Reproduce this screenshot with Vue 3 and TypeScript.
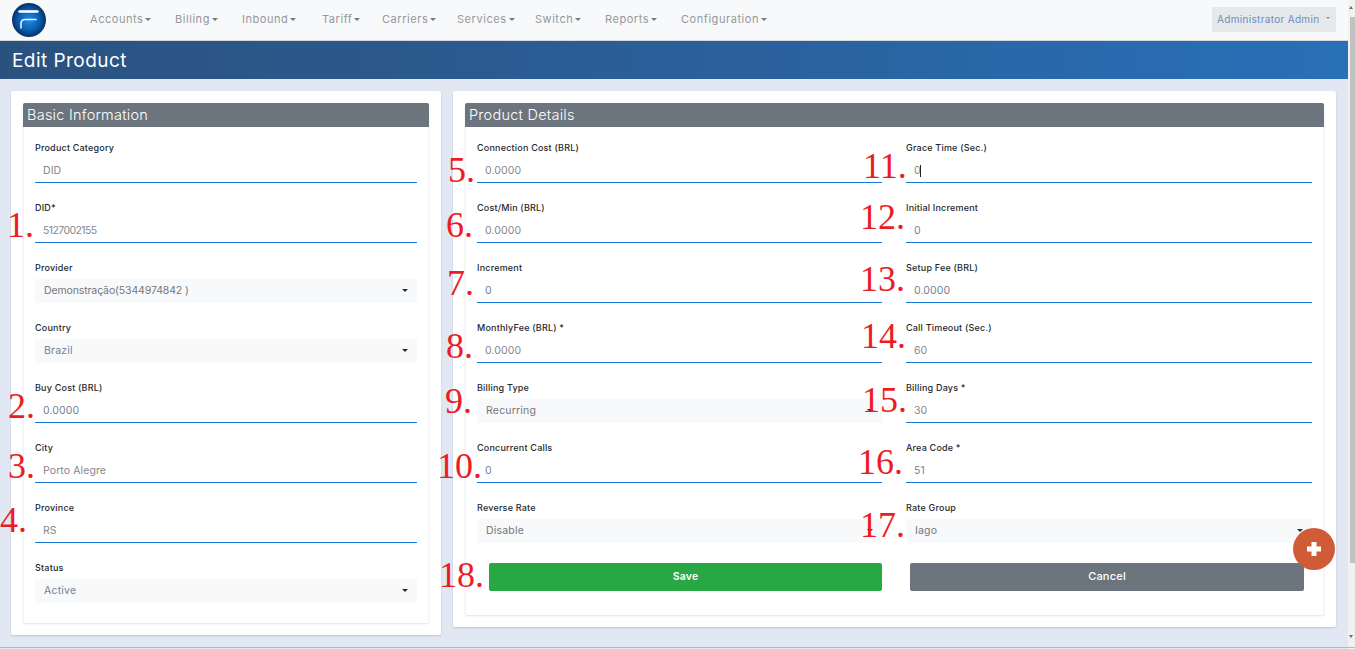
<script setup lang="ts">
interface Field { label: string; value: string; kind?: 'input' | 'select'; tone?: string; caret?: boolean }

const menu: string[] = ['Accounts', 'Billing', 'Inbound', 'Tariff', 'Carriers', 'Services', 'Switch', 'Reports', 'Configuration']

const basic: Field[] = [
  { label: 'Product Category', value: 'DID' },
  { label: 'DID*', value: '5127002155', tone: 'tight' },
  { label: 'Provider', value: 'Demonstração(5344974842 )', kind: 'select', tone: 'snug' },
  { label: 'Country', value: 'Brazil', kind: 'select', tone: 'blue' },
  { label: 'Buy Cost (BRL)', value: '0.0000', tone: 'blue' },
  { label: 'City', value: 'Porto Alegre' },
  { label: 'Province', value: 'RS' },
  { label: 'Status', value: 'Active', kind: 'select', tone: 'blue' },
]

const details: Field[] = [
  { label: 'Connection Cost (BRL)', value: '0.0000' },
  { label: 'Grace Time (Sec.)', value: '0', caret: true },
  { label: 'Cost/Min (BRL)', value: '0.0000' },
  { label: 'Initial Increment', value: '0', tone: 'blue' },
  { label: 'Increment', value: '0', tone: 'blue' },
  { label: 'Setup Fee (BRL)', value: '0.0000', tone: 'blue' },
  { label: 'MonthlyFee (BRL) *', value: '0.0000' },
  { label: 'Call Timeout (Sec.)', value: '60' },
  { label: 'Billing Type', value: 'Recurring', kind: 'select' },
  { label: 'Billing Days *', value: '30' },
  { label: 'Concurrent Calls', value: '0', tone: 'blue' },
  { label: 'Area Code *', value: '51', tone: 'blue' },
  { label: 'Reverse Rate', value: 'Disable', kind: 'select' },
  { label: 'Rate Group', value: 'Iago', kind: 'select' },
]

const marks: { text: string; x: number; base: number }[] = [
  { text: '1.', x: 7, base: 237 },
  { text: '2.', x: 8, base: 418 },
  { text: '3.', x: 8, base: 478 },
  { text: '4.', x: 0, base: 532 },
  { text: '5.', x: 448, base: 182 },
  { text: '6.', x: 446, base: 237 },
  { text: '7.', x: 447, base: 295 },
  { text: '8.', x: 446, base: 358 },
  { text: '9.', x: 445, base: 413 },
  { text: '10.', x: 437, base: 478 },
  { text: '11.', x: 863, base: 178 },
  { text: '12.', x: 860, base: 229 },
  { text: '13.', x: 860, base: 291 },
  { text: '14.', x: 861, base: 348 },
  { text: '15.', x: 862, base: 412 },
  { text: '16.', x: 858, base: 474 },
  { text: '17.', x: 860, base: 537 },
  { text: '18.', x: 439, base: 587 },
]

function markStyle(m: { x: number; base: number }) {
  return { left: `${m.x}px`, top: `${m.base - 30}px` }
}
</script>

<template>
  <div class="shell">
    <div class="page">
      <header class="nav">
        <svg class="logo" width="36" height="36" viewBox="0 0 36 36" aria-hidden="true">
          <defs>
            <radialGradient id="orb" cx="50%" cy="50%" r="52%">
              <stop offset="0" stop-color="#1c8ee6" />
              <stop offset="0.55" stop-color="#0b62b4" />
              <stop offset="0.85" stop-color="#053f80" />
              <stop offset="1" stop-color="#0a2a5a" />
            </radialGradient>
          </defs>
          <circle cx="18" cy="18" r="17" fill="url(#orb)" />
          <path d="M8.5 9.5H26.5" stroke="#fff" stroke-width="2.4" fill="none" stroke-linecap="round" />
          <path d="M10 26V21.5C10 18.5 11.5 17.5 14.5 17.5H25" stroke="#e8f2fb" stroke-width="1.6" fill="none" stroke-linecap="round" />
        </svg>
        <nav class="menu">
          <span v-for="m in menu" :key="m" class="menu-item">{{ m }}<i class="tri"></i></span>
        </nav>
        <div class="user">Administrator Admin<i class="tri small"></i></div>
      </header>

      <div class="title"><h1>Edit Product</h1></div>

      <main class="content">
        <section class="card left">
          <div class="inner">
            <h2>Basic Information</h2>
            <div class="fields single">
              <div v-for="f in basic" :key="f.label" class="field">
                <label>{{ f.label }}</label>
                <div v-if="f.kind === 'select'" class="select" :class="f.tone">{{ f.value }}<i class="tri dark"></i></div>
                <input v-else class="input" :class="f.tone" :value="f.value" readonly />
              </div>
            </div>
          </div>
        </section>

        <section class="card right">
          <div class="inner">
            <h2>Product Details</h2>
            <div class="fields double">
              <div v-for="f in details" :key="f.label" class="field">
                <label>{{ f.label }}</label>
                <div v-if="f.kind === 'select'" class="select" :class="f.tone">{{ f.value }}<i class="tri dark"></i></div>
                <div v-else class="input-wrap">
                  <input class="input" :class="f.tone" :value="f.value" readonly />
                  <span v-if="f.caret" class="text-caret"></span>
                </div>
              </div>
            </div>
            <div class="actions">
              <button class="btn save" type="button">Save</button>
              <button class="btn cancel" type="button">Cancel</button>
            </div>
          </div>
        </section>
      </main>
    </div>

    <aside class="scrollbar">
      <span class="arrow up"></span>
      <span class="thumb"></span>
      <span class="arrow down"></span>
    </aside>

    <div class="bottom-edge"></div>

    <button class="fab" type="button" aria-label="Add">
      <svg width="16" height="16" viewBox="0 0 16 16" aria-hidden="true">
        <path d="M8 1v14M1 8h14" stroke="#fff" stroke-width="5" stroke-linejoin="round" />
      </svg>
    </button>

    <span v-for="m in marks" :key="m.text" class="mark" :style="markStyle(m)">{{ m.text }}</span>
  </div>
</template>

<style>
html, body { margin: 0; padding: 0; overflow: hidden; }
</style>

<style scoped>
.shell {
  position: relative;
  display: flex;
  width: 1355px;
  height: 649px;
  overflow: hidden;
  background: #e1e8f3;
  font-family: Inter, "Noto Sans", sans-serif;
}
.page { flex: 1; min-width: 0; }
.nav {
  display: flex;
  align-items: center;
  height: 40px;
  padding: 0 12px 0 11px;
  background: #f8f9fa;
  border-bottom: 1px solid #d8d9db;
}
.logo { flex: none; }
.menu {
  display: grid;
  grid-template-columns: 85px 67px 80px 60px 75px 78px 70px 76px auto;
  margin-left: 43px;
  margin-top: -2px;
  flex: 1;
}
.menu-item {
  font-size: 11px;
  letter-spacing: 0.55px;
  color: #959799;
  white-space: nowrap;
}
.tri {
  display: inline-block;
  margin-left: 2px;
  vertical-align: 2px;
  border-top: 3px solid #77797b;
  border-left: 3px solid transparent;
  border-right: 3px solid transparent;
}
.tri.small { margin-left: 7px; vertical-align: 4px; border-top-color: #6c8ec4; border-top-width: 2.5px; border-left-width: 2.5px; border-right-width: 2.5px; }
.user {
  width: 124px;
  height: 25px;
  margin-top: -2px;
  box-sizing: border-box;
  padding-left: 5px;
  line-height: 25px;
  font-size: 10px;
  letter-spacing: 0.32px;
  white-space: nowrap;
  color: #6b8cc0;
  background: #e7e8ea;
}
.title {
  height: 38px;
  display: flex;
  align-items: center;
  padding-left: 12px;
  background: linear-gradient(90deg, #2a527f 0%, #2b5a90 35%, #2870b8 100%);
}
.title h1 {
  margin: 0;
  font-size: 19px;
  font-weight: 400;
  letter-spacing: 0.45px;
  color: #fff;
}
.content {
  display: flex;
  align-items: flex-start;
  gap: 12px;
  padding: 12px 12px 0 11px;
}
.card {
  box-sizing: border-box;
  background: #fff;
  border-radius: 2px;
  padding: 12px;
  box-shadow: 0 1px 2px rgba(90, 100, 120, 0.25);
}
.card.left { width: 430px; }
.card.right { width: 883px; }
.inner {
  border-radius: 2px;
  box-shadow: 0 1px 2px rgba(120, 125, 135, 0.22);
  border-left: 1px solid #f3f4f6;
  border-right: 1px solid #f3f4f6;
}
h2 {
  margin: 0 -1px;
  height: 24px;
  line-height: 24px;
  padding-left: 4px;
  font-size: 14.5px;
  font-weight: 300;
  letter-spacing: 0.25px;
  color: #fff;
  background: #6c757d;
  border-radius: 2px 2px 0 0;
}
.fields { padding: 8px 11px 8px; }
.fields.double {
  display: grid;
  grid-template-columns: 405px 406px;
  column-gap: 24px;
  padding-bottom: 0;
}
.field { height: 48px; margin-bottom: 12px; }
label {
  display: block;
  height: 24px;
  line-height: 25px;
  font-size: 9px;
  font-weight: 500;
  letter-spacing: 0.2px;
  color: #25292d;
  white-space: nowrap;
}
.input-wrap { position: relative; }
.input {
  display: block;
  box-sizing: border-box;
  width: 100%;
  height: 24px;
  padding: 0 8px;
  border: 0;
  border-bottom: 1px solid #1a78d6;
  border-radius: 0;
  outline: 0;
  background: #fff;
  font-family: inherit;
  font-size: 10.5px;
  letter-spacing: 0.1px;
  color: #85888c;
}
.select {
  position: relative;
  box-sizing: border-box;
  height: 24px;
  line-height: 24px;
  padding-left: 9px;
  font-size: 10.5px;
  letter-spacing: 0.2px;
  color: #74787c;
  background: #f8f9fa;
}
.input.blue, .select.blue { color: #728397; }
.input.tight { letter-spacing: -0.6px; }
.select.snug { letter-spacing: -0.12px; }
.tri.dark {
  position: absolute;
  right: 9px;
  top: 10px;
  margin: 0;
  border-top-color: #2a2d30;
}
.text-caret {
  position: absolute;
  left: 14px;
  top: 6px;
  width: 1px;
  height: 12px;
  background: #222;
}
.actions {
  display: grid;
  grid-template-columns: 393px 394px;
  column-gap: 28px;
  padding: 0 19px 24px 23px;
  margin-top: 8px;
}
.btn {
  height: 28px;
  border: 0;
  border-radius: 2px;
  padding: 0 0 2px;
  color: #fff;
  font-family: inherit;
  font-size: 10.5px;
  font-weight: 600;
  letter-spacing: 0.2px;
}
.save { background: #28a745; }
.cancel { background: #6c757d; font-weight: 500; font-size: 11px; }
.scrollbar {
  position: relative;
  flex: none;
  width: 7px;
  background: #f1f1f1;
}
.thumb {
  position: absolute;
  left: 2px;
  top: 17px;
  width: 5px;
  height: 546px;
  background: #c1c1c1;
}
.arrow { position: absolute; left: 1px; border-left: 2.5px solid transparent; border-right: 2.5px solid transparent; }
.arrow.up { top: 6px; border-bottom: 3px solid #6a6a6a; }
.arrow.down { bottom: 11px; border-top: 3px solid #6a6a6a; }
.bottom-edge {
  position: absolute;
  left: 0;
  right: 0;
  bottom: 1px;
  height: 1px;
  background: #b4b8bf;
}
.fab {
  position: absolute;
  left: 1293px;
  top: 528px;
  width: 42px;
  height: 42px;
  padding: 0;
  border: 0;
  border-radius: 50%;
  background: #cf5c36;
  display: flex;
  align-items: center;
  justify-content: center;
}
.mark {
  position: absolute;
  font-family: "Liberation Serif", serif;
  font-size: 36px;
  line-height: 1;
  color: #ed1c24;
  white-space: nowrap;
}
</style>
